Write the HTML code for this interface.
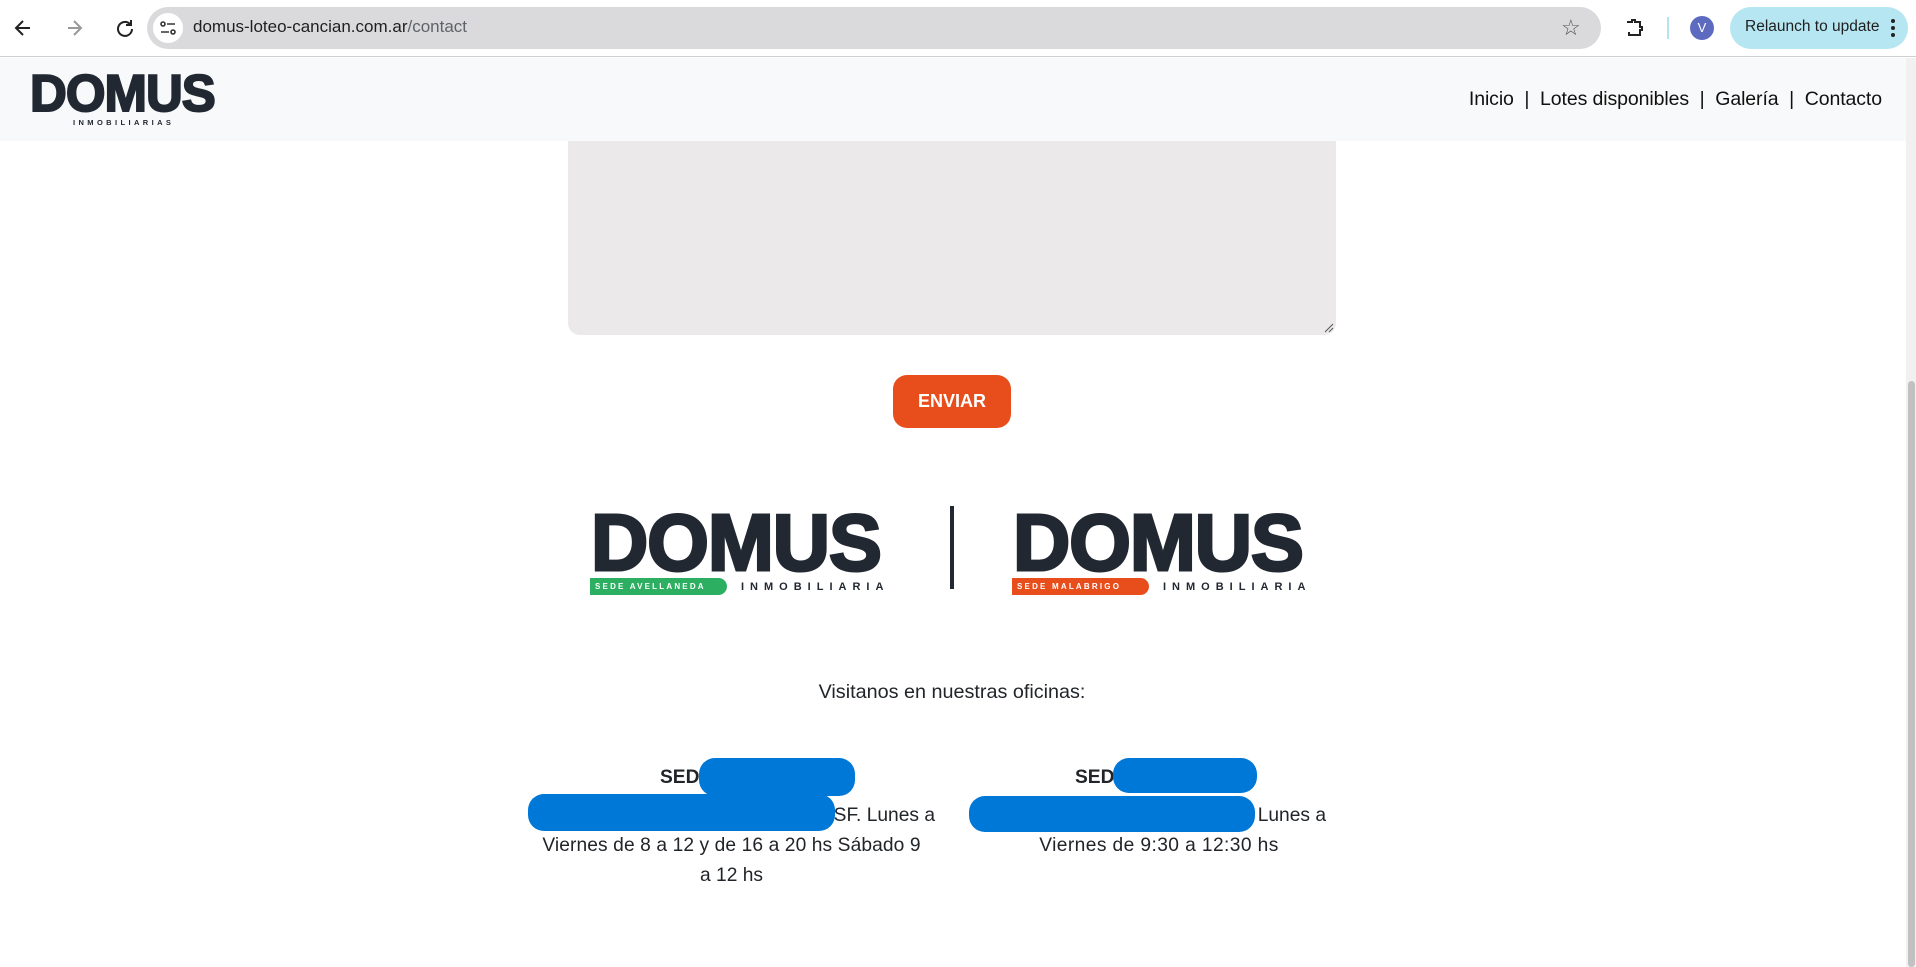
<!DOCTYPE html>
<html><head><meta charset="utf-8"><style>
*{margin:0;padding:0;box-sizing:border-box}
body{width:1916px;height:967px;overflow:hidden;background:#fff;font-family:"Liberation Sans",sans-serif;position:relative;color:#212529}
.a{position:absolute}
.dom{font-family:"Liberation Sans",sans-serif;font-weight:900;color:#222832;white-space:nowrap;transform-origin:left top;letter-spacing:-1px;-webkit-text-stroke:3px #222832}
.blob{position:absolute;background:#0078d7;border-radius:16px}
.t{position:absolute;font-size:19.2px;color:#212529;white-space:nowrap;line-height:30px}
</style></head><body>
<!-- browser chrome -->
<div class="a" style="left:0;top:0;width:1916px;height:57px;background:#fff;border-bottom:1px solid #d0d0d0"></div>
<svg class="a" style="left:12px;top:16px" width="130" height="24" viewBox="0 0 130 24" fill="none" stroke-width="2">
<path d="M18 12H5M11 5L4 12L11 19" stroke="#222"/>
<path d="M56 12H69M62 5L69 12L62 19" stroke="#999"/>
<path d="M118 8A7 7 0 1 0 120 13M119 4V9H114" stroke="#222"/>
</svg>
<div class="a" style="left:147px;top:7px;width:1454px;height:42px;background:#dadadc;border-radius:21px"></div>
<div class="a" style="left:153px;top:13px;width:30px;height:30px;background:#fff;border-radius:50%"></div>
<svg class="a" style="left:159px;top:19px" width="18" height="18" viewBox="0 0 18 18" fill="none" stroke="#333" stroke-width="1.6"><circle cx="4" cy="5" r="2"/><path d="M8 5H16M2 13H10"/><circle cx="14" cy="13" r="2"/></svg>
<div class="a" style="left:193px;top:17px;font-size:17px;color:#1f1f1f">domus-loteo-cancian.com.ar<span style="color:#5f6368">/contact</span></div>
<div class="a" style="left:1561px;top:15px;font-size:22px;color:#555">☆</div>
<svg class="a" style="left:1622px;top:16px" width="24" height="24" viewBox="0 0 24 24" fill="none" stroke="#222" stroke-width="2"><path d="M5 6H10V4H13V6H18V11H20V14H18V19H7V16"/></svg>
<div class="a" style="left:1667px;top:17px;width:2px;height:22px;background:#b3e4f0"></div>
<div class="a" style="left:1690px;top:16px;width:24px;height:24px;border-radius:50%;background:#5c6bc0;color:#fff;font-size:13px;text-align:center;line-height:24px">V</div>
<div class="a" style="left:1730px;top:7px;width:178px;height:42px;border-radius:21px;background:#b6e6f1"></div>
<div class="a" style="left:1745px;top:18px;font-size:15.5px;color:#1f1f1f">Relaunch to update</div>
<div class="a" style="left:1891px;top:19px;width:4px;height:4px;border-radius:50%;background:#222;box-shadow:0 7px 0 #222,0 14px 0 #222"></div>
<!-- navbar -->
<div class="a" style="left:0;top:58px;width:1906px;height:83px;background:#f8f9fa"></div>
<div class="a dom" style="left:30px;top:64px;font-size:52px;transform:scaleX(0.98);-webkit-text-stroke:2px #222832">DOMUS</div>
<div class="a" style="left:73px;top:118px;font-size:7.5px;font-weight:bold;letter-spacing:3.4px;color:#222832">INMOBILIARIAS</div>
<div class="a" style="left:1380px;top:88px;width:502px;text-align:right;font-size:19.5px;color:#111;white-space:nowrap;letter-spacing:-0.1px">Inicio &nbsp;| &nbsp;Lotes disponibles &nbsp;| &nbsp;Galería &nbsp;| &nbsp;Contacto</div>
<!-- scrollbar -->
<div class="a" style="left:1906px;top:58px;width:10px;height:909px;background:#f1f1f1"></div>
<div class="a" style="left:1908px;top:381px;width:7px;height:586px;background:#c1c1c1;border-radius:4px"></div>
<!-- textarea -->
<div class="a" style="left:568px;top:141px;width:768px;height:194px;background:#ebe9e9;border-radius:0 0 12px 12px"></div>
<svg class="a" style="left:1324px;top:323px" width="10" height="10"><path d="M1 9L9 1M5 9L9 5" stroke="#555"/></svg>
<!-- button -->
<div class="a" style="left:893px;top:375px;width:118px;height:53px;background:#e84e1b;border-radius:14px;color:#fff;font-weight:bold;font-size:18px;text-align:center;line-height:53px">ENVIAR</div>
<!-- logos -->
<div class="a dom" style="left:591px;top:497px;font-size:80px;transform:scaleX(0.99)">DOMUS</div>
<div class="a" style="left:590px;top:578px;width:137px;height:17px;background:#2daf62;border-radius:0 9px 9px 0;color:#fff;font-size:8px;font-weight:bold;letter-spacing:2.2px;line-height:17px;padding-left:5px">SEDE AVELLANEDA</div>
<div class="a" style="left:741px;top:581px;font-size:11px;font-weight:bold;letter-spacing:6px;color:#222832">INMOBILIARIA</div>
<div class="a" style="left:950px;top:506px;width:4px;height:83px;background:#222832"></div>
<div class="a dom" style="left:1013px;top:497px;font-size:80px;transform:scaleX(0.99)">DOMUS</div>
<div class="a" style="left:1012px;top:578px;width:137px;height:17px;background:#e84e1b;border-radius:0 9px 9px 0;color:#fff;font-size:8px;font-weight:bold;letter-spacing:2.2px;line-height:17px;padding-left:5px">SEDE MALABRIGO</div>
<div class="a" style="left:1163px;top:581px;font-size:11px;font-weight:bold;letter-spacing:6px;color:#222832">INMOBILIARIA</div>
<!-- text -->
<div class="t" style="left:652px;top:677px;width:600px;text-align:center;font-size:19.8px">Visitanos en nuestras oficinas:</div>
<div class="t" style="left:660px;top:763px;font-weight:600">SEDE</div>
<div class="t" style="left:700px;top:801px;width:235px;text-align:right">SF. Lunes a</div>
<div class="t" style="left:528px;top:831px;width:407px;text-align:center;letter-spacing:0.1px">Viernes de 8 a 12 y de 16 a 20 hs Sábado 9</div>
<div class="t" style="left:528px;top:861px;width:407px;text-align:center">a 12 hs</div>
<div class="t" style="left:1075px;top:763px;font-weight:600">SEDE</div>
<div class="t" style="left:1100px;top:801px;width:226px;text-align:right">Lunes a</div>
<div class="t" style="left:1009px;top:831px;width:300px;text-align:center;letter-spacing:0.4px">Viernes de 9:30 a 12:30 hs</div>
<div class="blob" style="left:699px;top:758px;width:156px;height:38px"></div>
<div class="blob" style="left:528px;top:794px;width:307px;height:37px"></div>
<div class="blob" style="left:1113px;top:758px;width:144px;height:35px"></div>
<div class="blob" style="left:969px;top:796px;width:286px;height:36px"></div>
</body></html>
